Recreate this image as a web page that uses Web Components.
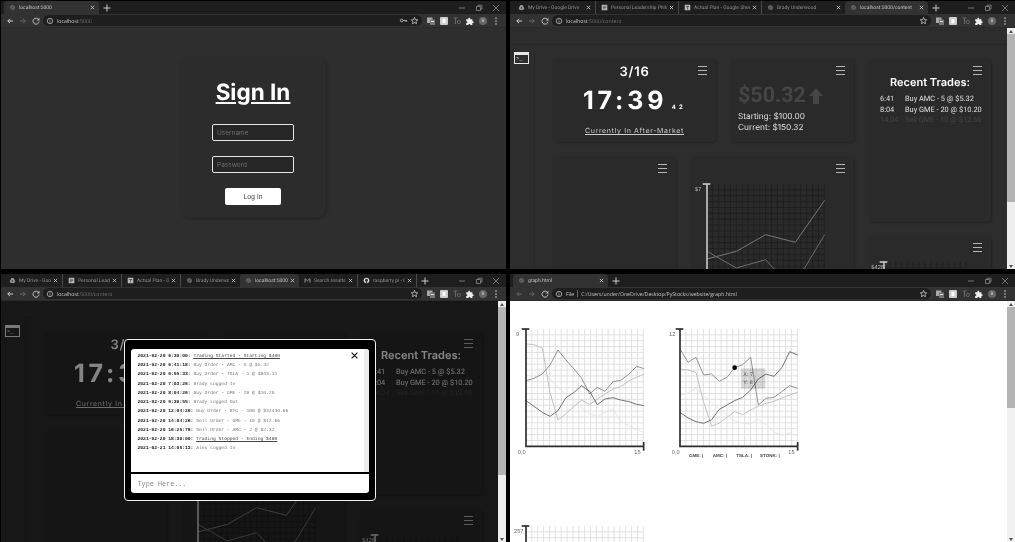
<!DOCTYPE html>
<html>
<head>
<meta charset="utf-8">
<title>PyStocks</title>
<style>
  html, body { margin: 0; height: 100%; background: #000; overflow: hidden; }
  .desktop {
    display: grid;
    grid-template-columns: 505px 505px;
    grid-template-rows: 268px 268px;
    column-gap: 4px;
    row-gap: 5px;
    padding: 1px 0 0 1px;
    font-family: "Open Sans", sans-serif;
    text-rendering: geometricPrecision;
    /* the reference is a grey, slightly soft downscale */
    filter: grayscale(1) blur(.4px);
  }
</style>
</head>
<body>
<div class="desktop">
  <browser-window host="localhost" rest=":5000" keyicon>
    <browser-tab slot="tabs" width="95" active>localhost:5000</browser-tab>
    <sign-in-page></sign-in-page>
  </browser-window>

  <browser-window host="localhost" rest=":5000/content">
    <browser-tab slot="tabs" width="83" icon="drive" sep>My Drive - Google Drive</browser-tab>
    <browser-tab slot="tabs" width="83" icon="doc" sep>Personal Leadership Philos</browser-tab>
    <browser-tab slot="tabs" width="83" icon="sheet" sep>Actual Plan - Google Sheet</browser-tab>
    <browser-tab slot="tabs" width="83">Brady Underwood</browser-tab>
    <browser-tab slot="tabs" width="83" active>localhost:5000/content</browser-tab>
    <dash-board></dash-board>
    <page-scrollbar thumb="168" track="#eeeeee"></page-scrollbar>
  </browser-window>

  <browser-window host="localhost" rest=":5000/content">
    <browser-tab slot="tabs" width="59" icon="drive" sep>My Drive - Goo</browser-tab>
    <browser-tab slot="tabs" width="59" icon="doc" sep>Personal Leade</browser-tab>
    <browser-tab slot="tabs" width="59" icon="sheet" sep>Actual Plan - G</browser-tab>
    <browser-tab slot="tabs" width="59">Brady Underwo</browser-tab>
    <browser-tab slot="tabs" width="59" active>localhost:5000/c</browser-tab>
    <browser-tab slot="tabs" width="59" icon="gmail" sep>Search results -</browser-tab>
    <browser-tab slot="tabs" width="59" icon="github" sep>raspberry pi - G</browser-tab>
    <dash-board></dash-board>
    <page-scrollbar thumb="168" track="#eeeeee"></page-scrollbar>
    <terminal-modal></terminal-modal>
  </browser-window>

  <browser-window file rest="C:/Users/under/OneDrive/Desktop/PyStocks/website/graph.html" dimback>
    <browser-tab slot="tabs" width="95" active>graph.html</browser-tab>
    <graph-page></graph-page>
    <page-scrollbar thumb="101" track="#f1f1f1"></page-scrollbar>
  </browser-window>
</div>

<script>
const ICONS = {
  back: '<path d="M8 5H2.8M5 2.8 2.8 5 5 7.2" fill="none" stroke="currentColor" stroke-width="1"/>',
  forward: '<path d="M2 5H7.2M5 2.8 7.2 5 5 7.2" fill="none" stroke="currentColor" stroke-width="1"/>',
  reload: '<path d="M7.6 3.6A3 3 0 1 0 8 5.6" fill="none" stroke="currentColor" stroke-width=".9"/><path d="M8.4 1.8V4.4H5.8Z" fill="currentColor"/>',
  info: '<circle cx="5" cy="5" r="3.4" fill="none" stroke="currentColor" stroke-width=".9"/><path d="M5 4.4V7M5 3V3.8" stroke="currentColor" stroke-width=".9"/>',
  star: '<path d="M5 1.6 6 4.1 8.6 4.3 6.6 6 7.2 8.6 5 7.2 2.8 8.6 3.4 6 1.4 4.3 4 4.1Z" fill="none" stroke="currentColor" stroke-width=".9"/>',
  key: '<circle cx="3" cy="5" r="1.5" fill="none" stroke="currentColor"/><path d="M4.5 5H9M7 5V6.4M8.5 5V6.4" stroke="currentColor" stroke-width=".9"/>',
  ext1: '<rect x="1" y="1.5" width="5.5" height="5.5" fill="#aaa"/><rect x="4" y="3.5" width="5" height="5.5" fill="#777"/><rect x="5" y="5" width="3" height="1" fill="#ddd"/>',
  ext2: '<rect x="1" y="1" width="8" height="8" rx="1" fill="#ccc"/><rect x="3.5" y="2.8" width="3" height="4.4" fill="#fff"/>',
  ext3: '<path d="M1.5 2H5.5M3.5 2V8" stroke="#666" stroke-width="1.1" fill="none"/><circle cx="6.8" cy="6" r="1.6" fill="none" stroke="#666"/>',
  puzzle: '<path d="M1.2 3.2H3.4C3 1.6 5.4 1.2 5.2 3.2H7.4V5.2C9.2 4.8 9.2 7.4 7.4 7V9H5.4C5.6 7.6 3.2 7.6 3.4 9H1.2V7C2.8 7.2 2.8 4.8 1.2 5.2Z" fill="#eee"/>',
  dots: '<circle cx="5" cy="2" r=".8" fill="#ccc"/><circle cx="5" cy="5" r=".8" fill="#ccc"/><circle cx="5" cy="8" r=".8" fill="#ccc"/>',
  globe: '<circle cx="5" cy="5" r="3.6" fill="#555"/><path d="M1.6 4.4 4 3.4 5 1.6M5.5 8.4 6.6 6 8.4 5.2" stroke="#777" stroke-width=".9" fill="none"/>',
  drive: '<path d="M3.6 1.5H6.4L9 6.2 7.6 8.6H2.4L1 6.2Z" fill="#999"/><path d="M5 4 3.6 6.4H6.4Z" fill="#2a2a2a"/>',
  doc: '<rect x="1" y="1" width="8" height="8" rx=".6" fill="#bbb"/><path d="M2.5 3.2H7.5M2.5 5H7.5M2.5 6.8H6" stroke="#333" stroke-width=".8"/>',
  sheet: '<rect x="1" y="1" width="8" height="8" rx=".6" fill="#bbb"/><path d="M2.5 3.6H7.5M5 3.6V7.8" stroke="#333" stroke-width=".9"/>',
  gmail: '<path d="M1.5 8V2.4L5 5.4 8.5 2.4V8" fill="none" stroke="#aaa" stroke-width="1.2"/>',
  github: '<circle cx="5" cy="5" r="4" fill="#ddd"/><circle cx="5" cy="4.6" r="2" fill="#333"/><rect x="4" y="6" width="2" height="3" fill="#333"/>'
};

function icon(name, size = 10) {
  return `<svg width="${size}" height="${size}" viewBox="0 0 10 10" aria-hidden="true">${ICONS[name]}</svg>`;
}

class BrowserTab extends HTMLElement {
  constructor() {
    super();
    this.attachShadow({ mode: 'open' });
  }

  connectedCallback() {
    const width = this.getAttribute('width') || 83;
    const fav = this.getAttribute('icon') || 'globe';
    this.shadowRoot.innerHTML = `
      <style>
        :host {
          display: flex;
          align-items: center;
          gap: 2px;
          box-sizing: border-box;
          width: ${width}px;
          height: 13px;
          padding: 0 4px 0 5px;
          font: 5px Roboto, sans-serif;
          color: #8f8f8f;
          position: relative;
          flex: none;
        }
        :host([active]) {
          background: #323232;
          color: #c4c4c4;
          border-radius: 4px 4px 0 0;
        }
        :host([sep]) {
          border-right: 1px solid #4a4a4a;
        }
        .title {
          flex: 1;
          margin-left: 1px;
          white-space: nowrap;
          overflow: hidden;
        }
        .close {
          width: 5px;
          height: 5px;
          color: #ccc;
          flex: none;
        }
        svg { display: block; flex: none; }
      </style>
      ${icon(fav, 7)}
      <span class="title"><slot></slot></span>
      <svg class="close" viewBox="0 0 6 6"><path d="M1 1 5 5M5 1 1 5" stroke="currentColor" stroke-width="1"/></svg>
    `;
  }
}

class BrowserWindow extends HTMLElement {
  constructor() {
    super();
    this.attachShadow({ mode: 'open' });
  }

  connectedCallback() {
    const host = this.getAttribute('host') || '';
    const rest = this.getAttribute('rest') || '';
    const isFile = this.hasAttribute('file');
    const address = isFile
      ? `<span class="file">File</span><span class="pipe"></span><span class="path">${rest}</span>`
      : `<span class="host">${host}</span><span class="rest">${rest}</span>`;
    this.shadowRoot.innerHTML = `
      <style>
        :host {
          display: flex;
          flex-direction: column;
          overflow: hidden;
          background: #2d2d2d;
          font-family: "Open Sans", sans-serif;
        }
        .strip {
          display: flex;
          align-items: flex-end;
          height: 13px;
          padding-left: 3px;
          background: #1e1e1e;
          flex: none;
        }
        .plus {
          width: 8px;
          height: 8px;
          margin: 0 0 2px 4px;
          color: #ccc;
        }
        .controls {
          margin-left: auto;
          display: flex;
          gap: 9px;
          align-items: center;
          height: 13px;
          padding-right: 6px;
        }
        .controls svg { width: 8px; height: 8px; color: #8a8a8a; }
        .toolbar {
          display: flex;
          align-items: center;
          height: 14px;
          padding-left: 4px;
          background: #323232;
          border-bottom: 1px solid #2a2a2a;
          box-sizing: border-box;
          flex: none;
          color: #bbb;
        }
        .nav { display: flex; gap: 3px; flex: none; }
        .nav .off { color: #666; }
        .nav .on { color: #ccc; }
        .omni {
          flex: 1;
          display: flex;
          align-items: center;
          height: 11px;
          margin: 0 4px 0 2px;
          padding: 0 3px;
          background: #1e1e1e;
          border-radius: 6px;
          font-size: 5.2px;
          white-space: nowrap;
          min-width: 0;
        }
        .omni .host, .omni .file, .omni .path { color: #c8c8c8; }
        .omni .rest { color: #707070; }
        .omni .lock { margin-right: 3px; color: #c8c8c8; }
        .pipe { width: 1px; height: 7px; background: #666; margin: 0 3px; }
        .spacer { flex: 1; }
        .tools { display: flex; align-items: center; gap: 3px; padding-right: 5px; flex: none; }
        .avatar {
          width: 8px;
          height: 8px;
          border-radius: 50%;
          background: #666;
          color: #ddd;
          font-size: 4.5px;
          line-height: 8px;
          text-align: center;
          margin: 0 1px;
        }
        .content {
          position: relative;
          flex: 1;
          display: flex;
          min-height: 0;
          overflow: hidden;
        }
        svg { display: block; flex: none; }
      </style>
      <div class="strip">
        <slot name="tabs"></slot>
        <svg class="plus" viewBox="0 0 8 8"><path d="M4 .5V7.5M.5 4H7.5" stroke="currentColor" stroke-width="1"/></svg>
        <div class="controls">
          <svg viewBox="0 0 8 8"><path d="M1 4H7" stroke="currentColor" stroke-width=".8"/></svg>
          <svg viewBox="0 0 8 8"><path d="M1.5 2.5H5.5V6.5H1.5ZM3 2.5V1.2H7V5H5.5" fill="none" stroke="currentColor" stroke-width=".8"/></svg>
          <svg viewBox="0 0 8 8"><path d="M1 1 7 7M7 1 1 7" stroke="currentColor" stroke-width=".8"/></svg>
        </div>
      </div>
      <div class="toolbar">
        <div class="nav">
          <span class="${this.hasAttribute('dimback') ? 'off' : 'on'}">${icon('back')}</span>
          <span class="off">${icon('forward')}</span>
          <span class="on">${icon('reload')}</span>
        </div>
        <div class="omni">
          <span class="lock">${icon('info', 8)}</span>
          ${address}
          <span class="spacer"></span>
          ${this.hasAttribute('keyicon') ? `<span style="color:#bbb;margin-right:2px">${icon('key', 9)}</span>` : ''}
          <span style="color:#ccc">${icon('star', 9)}</span>
        </div>
        <div class="tools">
          ${icon('ext1')}${icon('ext2')}${icon('ext3')}${icon('puzzle')}
          <span class="avatar">B</span>
          ${icon('dots')}
        </div>
      </div>
      <div class="content"><slot></slot></div>
    `;
  }
}

class PageScrollbar extends HTMLElement {
  constructor() {
    super();
    this.attachShadow({ mode: 'open' });
  }

  connectedCallback() {
    const thumb = this.getAttribute('thumb') || 100;
    const track = this.getAttribute('track') || '#f1f1f1';
    this.shadowRoot.innerHTML = `
      <style>
        :host {
          display: flex;
          flex-direction: column;
          flex: none;
          width: 8px;
          background: ${track};
        }
        .arrow { height: 6px; display: flex; align-items: center; justify-content: center; flex: none; }
        .thumb { height: ${thumb}px; background: #b4b4b4; flex: none; }
        .fill { flex: 1; }
        svg { display: block; }
      </style>
      <div class="arrow"><svg width="4" height="3"><path d="M2 0 4 3H0Z" fill="#505050"/></svg></div>
      <div class="thumb"></div>
      <div class="fill"></div>
      <div class="arrow"><svg width="4" height="3"><path d="M0 0H4L2 3Z" fill="#505050"/></svg></div>
    `;
  }
}

class SignInPage extends HTMLElement {
  constructor() {
    super();
    this.attachShadow({ mode: 'open' });
    this.shadowRoot.innerHTML = `
      <style>
        :host {
          flex: 1;
          display: flex;
          justify-content: center;
          align-items: flex-start;
          padding: 29px 1px 0 0;
          background: #2e2e2e;
        }
        .card {
          box-sizing: border-box;
          width: 146px;
          height: 161px;
          display: flex;
          flex-direction: column;
          align-items: center;
          padding-top: 21px;
          background: #2c2c2c;
          border-radius: 9px;
          box-shadow: 1px 1px 2px #232323;
          font-family: Inter, sans-serif;
        }
        h1 {
          margin: 0 0 17px;
          font-size: 22.5px;
          line-height: 29px;
          font-weight: 700;
          color: #fff;
          text-decoration: underline;
          text-decoration-thickness: 2px;
          text-underline-offset: 2px;
        }
        input {
          box-sizing: border-box;
          width: 82px;
          height: 17px;
          margin: 0 0 15px;
          padding: 0 4px;
          background: #262626;
          border: 1px solid #e6e6e6;
          border-radius: 2px;
          font: 6.5px Inter, sans-serif;
          color: #fff;
          outline: none;
        }
        input::placeholder { color: #6e6e6e; opacity: 1; }
        button {
          width: 56px;
          height: 17px;
          background: #fff;
          border: 0;
          border-radius: 2px;
          font: 6.5px Inter, sans-serif;
          color: #444;
          padding: 0;
        }
      </style>
      <div class="card">
        <h1>Sign In</h1>
        <input placeholder="Username">
        <input placeholder="Password">
        <button>Log In</button>
      </div>
    `;
  }
}

class DashCard extends HTMLElement {
  constructor() {
    super();
    this.attachShadow({ mode: 'open' });
    this.shadowRoot.innerHTML = `
      <style>
        :host {
          display: block;
          position: relative;
          box-sizing: border-box;
          background: #2a2a2a;
          border-radius: 4px;
          box-shadow: 1px 1px 2px #232323;
          color: #fff;
          font-family: Inter, sans-serif;
        }
        .menu {
          position: absolute;
          top: 7px;
          right: 9px;
          width: 9px;
          height: 9px;
          display: flex;
          flex-direction: column;
          justify-content: space-between;
        }
        .menu i { display: block; height: 1px; background: #b5b5b5; }
      </style>
      <div class="menu"><i></i><i></i><i></i></div>
      <slot></slot>
    `;
  }
}

class LineGraph extends HTMLElement {
  #config = null;

  constructor() {
    super();
    this.attachShadow({ mode: 'open' });
  }

  set config(value) {
    this.#config = value;
    this.render();
  }

  render() {
    // point values are read off the picture at 3x, so everything is drawn in thirds
    const { width = 353, height = 352, dark, lines, top, topX = -30, topY = 20, origin, right, rightX, legend, tip } = this.#config;
    const grid = dark ? '#1e1e1e' : '#dcdcdc';
    const axis = dark ? '#c4c4c4' : '#2c2c2c';
    const label = dark ? '#b0b0b0' : '#666';
    let gridLines = '';
    for (let x = 17.6; x <= width; x += 17.6) gridLines += `<path d="M${x} 0V${height}"/>`;
    for (let y = 17.6; y <= height; y += 17.6) gridLines += `<path d="M0 ${y}H${width}"/>`;
    const polylines = lines.map(l => `<polyline points="${l.pts}" stroke="${l.color}" stroke-width="${l.w || 3}" fill="none"/>`).join('');
    const text = (x, y, t, anchor = 'start', extra = '') =>
      `<text x="${x}" y="${y}" text-anchor="${anchor}" font-family="Liberation Sans, sans-serif" font-size="17" fill="${label}" ${extra}>${t}</text>`;

    this.shadowRoot.innerHTML = `
      <style>
        :host { display: block; flex: none; width: ${width / 3}px; height: ${height / 3}px; }
        svg { display: block; overflow: visible; width: ${width / 3}px; height: ${height / 3}px; }
      </style>
      <svg viewBox="0 0 ${width} ${height}">
        <g stroke="${grid}" stroke-width="2.6" fill="none">${gridLines}</g>
        ${polylines}
        <path d="M0 0V${height}${origin ? `H${width}` : ''}" stroke="${axis}" stroke-width="5" fill="none"/>
        <path d="M-13 0H10" stroke="${axis}" stroke-width="5"/>
        ${origin ? `<path d="M${width} ${height - 13}V${height + 13}" stroke="${axis}" stroke-width="5"/>` : ''}
        ${top ? text(topX, topY, top) : ''}
        ${origin ? text(-25, height + 22, origin) : ''}
        ${right ? text(rightX, height + 24, right) : ''}
        ${legend || ''}
        ${tip || ''}
      </svg>
    `;
  }
}

const offset = (pts, dx, dy) => pts.map(([x, y]) => `${x - dx},${y - dy}`).join(' ');

const DARK_MAIN = [
  { color: '#777', pts: '0,225 88,202 176,152 265,175 353,49' },
  { color: '#6e6e6e', pts: '0,202 88,252 176,227 235,292 293,252 353,152' }
];
const DARK_SMALL = [];

const LIGHT_ONE = [
  { color: '#e6e6e6', pts: offset([[46,190],[70,178],[95,160],[118,180],[142,205],[165,225],[190,245],[213,265],[237,285],[260,292],[283,280],[307,270],[330,305],[355,320],[378,332],[400,340]], 46, 30) },
  { color: '#c2c2c2', pts: offset([[46,75],[70,77],[95,87],[118,220],[142,303],[165,285],[190,262],[213,243],[237,257],[260,240],[283,225],[307,210],[330,203],[355,185],[378,175],[400,165]], 46, 30) },
  { color: '#949494', pts: offset([[46,185],[70,178],[95,165],[118,138],[142,93],[165,122],[190,150],[213,178],[237,225],[260,205],[283,217],[307,188],[330,184],[355,165],[378,142],[400,149]], 46, 30) },
  { color: '#707070', pts: offset([[46,245],[70,262],[95,280],[118,292],[142,275],[165,237],[190,220],[213,200],[237,217],[260,257],[283,240],[307,236],[330,243],[355,248],[378,256],[400,260]], 46, 30) }
];
const LIGHT_TWO = [
  { color: '#e6e6e6', pts: offset([[58,230],[82,222],[106,208],[129,230],[153,250],[176,270],[199,290],[222,305],[246,312],[270,315],[293,300],[316,318],[340,340],[364,348],[387,342],[411,350]], 58, 30) },
  { color: '#c2c2c2', pts: offset([[58,150],[82,153],[106,160],[129,250],[153,322],[176,312],[199,295],[222,278],[246,287],[270,273],[293,262],[316,253],[340,247],[364,237],[387,228],[411,220]], 58, 30) },
  { color: '#949494', pts: offset([[58,90],[82,130],[106,115],[129,168],[153,165],[176,187],[199,175],[222,146],[246,137],[270,115],[293,258],[316,238],[340,235],[363,218],[387,200],[411,208]], 58, 30) },
  { color: '#707070', pts: offset([[58,280],[82,297],[106,308],[129,313],[153,302],[176,271],[199,258],[222,245],[246,235],[270,213],[293,180],[316,165],[340,172],[364,145],[387,98],[411,108]], 58, 30) }
];

class DashBoard extends HTMLElement {
  constructor() {
    super();
    this.attachShadow({ mode: 'open' });
    this.shadowRoot.innerHTML = `
      <style>
        :host {
          flex: 1;
          min-width: 0;
          display: flex;
          flex-direction: column;
          background: #2d2d2d;
          font-family: Inter, sans-serif;
        }
        header {
          height: 17px;
          flex: none;
          border-bottom: 1px solid #272727;
          box-sizing: border-box;
        }
        .body { flex: 1; display: flex; min-height: 0; }
        .side {
          box-sizing: border-box;
          width: 25px;
          flex: none;
          padding: 7px 0 0 4px;
          border-right: 1px solid #272727;
        }
        .term {
          width: 14.5px;
          height: 11.5px;
          box-sizing: border-box;
          border: 1px solid #e8e8e8;
          border-top-width: 3px;
          color: #e8e8e8;
          font: 5.5px/7px "Liberation Mono", monospace;
          padding-left: 1px;
        }
        .grid {
          display: grid;
          grid-template-columns: 123px 25px 123px 122px;
          grid-template-rows: 83px 65px 200px;
          column-gap: 15px;
          row-gap: 14.5px;
          padding: 14px 0 0 18px;
          flex: none;
        }
        .when { grid-column: 1 / 3; grid-row: 1; text-align: center; padding-top: 5px; box-sizing: border-box; }
        .balance { grid-column: 3; grid-row: 1; padding: 24px 0 0 7px; }
        .trades { grid-column: 4; grid-row: 1 / 3; padding-top: 17px; }
        .blank { grid-column: 1; grid-row: 2 / 4; }
        .chart { grid-column: 2 / 4; grid-row: 2 / 4; padding: 27px 0 0 16px; }
        .mini { grid-column: 4; grid-row: 3; padding: 26px 0 0 15px; }
        .date { font-size: 13px; line-height: 16px; font-weight: 600; letter-spacing: .7px; }
        .clock {
          margin-top: 7px;
          font-size: 25px;
          line-height: 29px;
          font-weight: 700;
          letter-spacing: 3.8px;
          white-space: nowrap;
        }
        .clock small { font-size: 6px; letter-spacing: 3.2px; }
        .session {
          margin-top: 4px;
          font-size: 7px;
          line-height: 9px;
          letter-spacing: .65px;
          color: #d0d0d0;
          text-decoration: underline;
        }
        .money {
          display: flex;
          align-items: center;
          gap: 3px;
          font-family: Roboto, sans-serif;
          font-size: 21.5px;
          line-height: 26px;
          font-weight: 700;
          color: #454545;
        }
        .stat { font-size: 8.3px; line-height: 11.3px; color: #e0e0e0; }
        .money + .stat { margin-top: 3px; }
        h2 {
          margin: 0 0 5px;
          font-size: 11px;
          line-height: 13px;
          font-weight: 600;
          text-align: center;
        }
        .row {
          display: grid;
          grid-template-columns: 25px 1fr;
          padding-left: 11px;
          font-family: Roboto, sans-serif;
          font-size: 7.4px;
          line-height: 10.7px;
          color: #e0e0e0;
          white-space: nowrap;
        }
        .row.old { color: #444; }
      </style>
      <header></header>
      <div class="body">
        <div class="side"><div class="term">&gt;_</div></div>
        <div class="grid">
          <dash-card class="when">
            <div class="date">3/16</div>
            <div class="clock">17:39<small> 42</small></div>
            <div class="session">Currently In After-Market</div>
          </dash-card>
          <dash-card class="balance">
            <div class="money">$50.32
              <svg width="14" height="16" viewBox="0 0 14 16"><path d="M7 0 14 8H10V16H4V8H0Z" fill="#454545"/></svg>
            </div>
            <div class="stat">Starting: $100.00</div>
            <div class="stat">Current: $150.32</div>
          </dash-card>
          <dash-card class="trades">
            <h2>Recent Trades:</h2>
            <div class="row"><span>6:41</span><span>Buy AMC - 5 @ $5.32</span></div>
            <div class="row"><span>8:04</span><span>Buy GME - 20 @ $10.20</span></div>
            <div class="row old"><span>14:04</span><span>Sell GME - 10 @ $12.66</span></div>
          </dash-card>
          <dash-card class="blank"></dash-card>
          <dash-card class="chart"><line-graph id="main"></line-graph></dash-card>
          <dash-card class="mini"><line-graph id="small"></line-graph></dash-card>
        </div>
      </div>
    `;
    this.shadowRoot.querySelector('#main').config = { dark: true, lines: DARK_MAIN, top: '$7', topX: -36 };
    this.shadowRoot.querySelector('#small').config = { dark: true, width: 247, lines: DARK_SMALL, top: '$428', topX: -38 };
  }
}

class GraphPage extends HTMLElement {
  constructor() {
    super();
    this.attachShadow({ mode: 'open' });
    this.shadowRoot.innerHTML = `
      <style>
        :host {
          flex: 1;
          min-width: 0;
          background: #fff;
          display: grid;
          grid-template-columns: 117.5px 117.5px;
          justify-content: start;
          align-content: start;
          column-gap: 36.5px;
          row-gap: 80px;
          padding: 28px 0 0 15.5px;
          box-sizing: border-box;
        }
      </style>
      <line-graph id="one"></line-graph>
      <line-graph id="two"></line-graph>
      <line-graph id="three"></line-graph>
    `;
    const legendText = (x, t) => `<text x="${x}" y="${352 + 31}" font-family="Liberation Sans, sans-serif" font-size="13.5" font-weight="700" fill="#444">${t}</text>`;
    this.shadowRoot.querySelector('#one').config = {
      lines: LIGHT_ONE, top: '9', origin: '0,0', right: '15', rightX: 325
    };
    this.shadowRoot.querySelector('#two').config = {
      lines: LIGHT_TWO, top: '12', topX: -33, origin: '0,0', right: '15', rightX: 325,
      legend: legendText(27, 'GME: |') + legendText(98, 'AMC: |') + legendText(169, 'TSLA: |') + legendText(240, 'STONK: |'),
      tip: `<circle cx="164" cy="116" r="7" fill="#000"/>
            <rect x="183" y="118" width="73" height="61" fill="#000" fill-opacity=".15"/>
            <text x="190" y="142" font-family="Liberation Sans, sans-serif" font-size="16.3" fill="#555">X: 7</text>
            <text x="190" y="166" font-family="Liberation Sans, sans-serif" font-size="16.3" fill="#555">Y: 8</text>`
    };
    this.shadowRoot.querySelector('#three').config = { lines: [], top: '257', topX: -36 };
  }
}

const LOG_LINES = [
  ['2021-02-20 6:30:00:', 'Trading Started - Starting $400', true],
  ['2021-02-20 6:41:18:', 'Buy Order - AMC - 5 @ $5.32'],
  ['2021-02-20 6:55:33:', 'Buy Order - TSLA - 1 @ $843.11'],
  ['2021-02-20 7:03:26:', 'Brady Logged In'],
  ['2021-02-20 8:04:26:', 'Buy Order - GME - 20 @ $10.20'],
  ['2021-02-20 9:30:55:', 'Brady Logged Out'],
  ['2021-02-20 12:04:26:', 'Buy Order - BTC - 100 @ $32430.66'],
  ['2021-02-20 14:04:26:', 'Sell Order - GME - 10 @ $12.66'],
  ['2021-02-20 16:25:76:', 'Sell Order - AMC - 2 @ $2.32'],
  ['2021-02-20 18:30:00:', 'Trading Stopped - Ending $480', true],
  ['2021-02-21 14:05:13:', 'Alex Logged In']
];

class TerminalModal extends HTMLElement {
  constructor() {
    super();
    this.attachShadow({ mode: 'open' });
    const rows = LOG_LINES.map(([time, msg, mark]) =>
      `<div class="line"><b>${time}</b> <span class="${mark ? 'mark' : ''}">${msg}</span></div>`).join('');
    this.shadowRoot.innerHTML = `
      <style>
        :host {
          position: absolute;
          inset: 0 8px 0 0;
          background: rgba(0, 0, 0, .48);
          display: block;
        }
        .modal {
          position: absolute;
          left: 123px;
          top: 38px;
          box-sizing: border-box;
          width: 252px;
          height: 162px;
          padding: 9px 6px 7px 6px;
          display: flex;
          flex-direction: column;
          background: #000;
          border: 1.5px solid #f2f2f2;
          border-radius: 4px;
        }
        .log {
          flex: 1;
          position: relative;
          display: flex;
          background: #fff;
          border-radius: 3px 3px 0 0;
          overflow: hidden;
          min-height: 0;
        }
        .lines {
          flex: 1;
          padding: 3px 0 0 6.5px;
          font: 4.67px/9.22px "Liberation Mono", monospace;
          color: #777;
          white-space: pre;
        }
        b { color: #222; }
        .mark { color: #444; text-decoration: underline; }
        .bar {
          width: 5px;
          flex: none;
          background: #ededed;
        }
        .close {
          position: absolute;
          right: 11px;
          top: 3px;
          width: 7px;
          height: 7px;
        }
        .entry {
          height: 19px;
          margin-top: 2px;
          background: #fff;
          border-radius: 0 0 3px 3px;
          display: flex;
          align-items: center;
          padding-left: 6.5px;
          flex: none;
        }
        input {
          flex: 1;
          min-width: 0;
          border: 0;
          padding: 0;
          background: transparent;
          outline: none;
          font: 6.8px "Liberation Mono", monospace;
        }
        input::placeholder { color: #8a8a8a; opacity: 1; }
      </style>
      <div class="modal">
        <div class="log">
          <div class="lines">${rows}</div>
          <div class="bar"></div>
          <svg class="close" viewBox="0 0 7 7"><path d="M.6 .6 6.4 6.4M6.4 .6 .6 6.4" stroke="#111" stroke-width="1.1"/></svg>
        </div>
        <div class="entry"><input placeholder="Type Here..."></div>
      </div>
    `;
  }
}

customElements.define('browser-tab', BrowserTab);
customElements.define('browser-window', BrowserWindow);
customElements.define('page-scrollbar', PageScrollbar);
customElements.define('sign-in-page', SignInPage);
customElements.define('dash-card', DashCard);
customElements.define('line-graph', LineGraph);
customElements.define('dash-board', DashBoard);
customElements.define('graph-page', GraphPage);
customElements.define('terminal-modal', TerminalModal);
</script>
</body>
</html>
